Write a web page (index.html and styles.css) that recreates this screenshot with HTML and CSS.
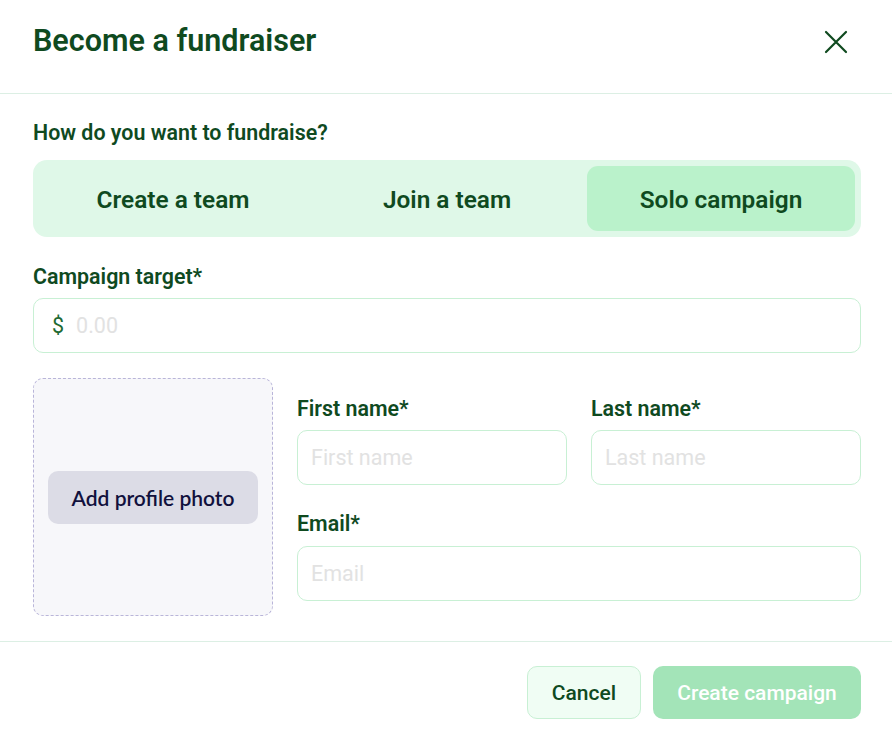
FILE: index.html
```html
<!DOCTYPE html>
<html>
<head>
<meta charset="utf-8">
<link rel="stylesheet" href="styles.css">
</head>
<body>
<div class="modal">
  <header class="header">
    <h1 class="title">Become a fundraiser</h1>
    <button class="close" aria-label="Close">
      <svg width="24" height="24" viewBox="0 0 24 24"><path d="M2 2 L22 22 M22 2 L2 22" stroke="#0f4a1f" stroke-width="2.2" fill="none" stroke-linecap="round"/></svg>
    </button>
  </header>
  <main class="content">
    <div class="label q">How do you want to fundraise?</div>
    <div class="segmented">
      <div class="seg">Create a team</div>
      <div class="seg">Join a team</div>
      <div class="seg active">Solo campaign</div>
    </div>
    <div class="label target">Campaign target*</div>
    <div class="input money"><span class="dollar">$</span><span class="ph">0.00</span></div>
    <div class="row">
      <div class="photo">
        <button class="photo-btn">Add profile photo</button>
      </div>
      <div class="fields">
        <div class="pair">
          <div class="field">
            <div class="label">First name*</div>
            <div class="input"><span class="ph">First name</span></div>
          </div>
          <div class="field">
            <div class="label">Last name*</div>
            <div class="input"><span class="ph">Last name</span></div>
          </div>
        </div>
        <div class="field email">
          <div class="label">Email*</div>
          <div class="input"><span class="ph">Email</span></div>
        </div>
      </div>
    </div>
  </main>
  <footer class="footer">
    <button class="btn cancel">Cancel</button>
    <button class="btn create">Create campaign</button>
  </footer>
</div>
</body>
</html>
```
FILE: styles.css
```css
* { box-sizing: border-box; }
body {
  margin: 0;
  background: #ffffff;
  font-family: Roboto, "Liberation Sans", sans-serif;
  color: #0f4a1f;
}
.modal { width: 892px; }
.header {
  height: 94px;
  display: flex;
  align-items: center;
  justify-content: space-between;
  padding: 0 44px 12px 33px;
  border-bottom: 1px solid #dcefe4;
}
.title {
  margin: 0;
  font-size: 30.5px;
  font-weight: 600;
  line-height: 36px;
  color: #0f4a1f;
}
.close {
  border: 0;
  background: none;
  padding: 0;
  width: 24px;
  height: 24px;
  display: flex;
  margin-top: 2px;
}
.content {
  padding: 26px 31px 25px 33px;
  display: flex;
  flex-direction: column;
}
.label {
  font-size: 21.4px;
  font-weight: 600;
  line-height: 26px;
  color: #0f4a1f;
}
.q { margin-bottom: 14px; }
.segmented {
  height: 77px;
  background: #dff8e8;
  border-radius: 14px;
  padding: 6px;
  display: grid;
  grid-template-columns: 1fr 1fr 1fr;
  gap: 6px;
}
.seg {
  display: flex;
  align-items: center;
  justify-content: center;
  font-size: 24.4px;
  font-weight: 600;
  border-radius: 11px;
  color: #0f4a1f;
  padding-top: 2px;
}
.seg.active { background: #baf2cb; }
.target { margin-top: 27px; margin-bottom: 8px; }
.input {
  height: 55px;
  border: 1px solid #c8f0d4;
  border-radius: 10px;
  display: flex;
  align-items: center;
  padding-left: 13px;
  font-size: 21.5px;
  background: #fff;
}
.ph { color: #e2e2e2; }
.money { padding-left: 18px; }
.dollar { color: #1e6a32; margin-right: 12px; }
.row {
  margin-top: 25px;
  display: flex;
  gap: 24px;
}
.photo {
  width: 240px;
  height: 238px;
  flex: none;
  border: 1px dashed #b9b5d9;
  border-radius: 10px;
  background: #f7f7fa;
  display: flex;
  align-items: center;
  padding: 0 14px;
}
.photo-btn {
  width: 100%;
  height: 53px;
  border: 0;
  border-radius: 10px;
  background: #dcdce6;
  font-family: Lato, "Open Sans", sans-serif;
  font-size: 21px;
  font-weight: 600;
  color: #11113d;
}
.fields {
  flex: 1;
  padding-top: 18px;
  display: flex;
  flex-direction: column;
}
.pair {
  display: grid;
  grid-template-columns: 1fr 1fr;
  gap: 24px;
}
.field .label { margin-bottom: 8px; }
.email { margin-top: 26px; }
.email .label { margin-bottom: 9px; }
.footer {
  border-top: 1px solid #dcefe4;
  padding: 24px 31px 16px 33px;
  display: flex;
  justify-content: flex-end;
  gap: 12px;
}
.btn {
  height: 53px;
  border-radius: 10px;
  font-family: Roboto, "Liberation Sans", sans-serif;
  font-size: 21px;
  font-weight: 500;
  padding: 0;
}
.cancel {
  width: 114px;
  background: #f0fdf4;
  border: 1px solid #c8f0d4;
  color: #0f4a1f;
}
.create {
  width: 208px;
  background: #a3e4b8;
  border: 0;
  color: #ffffff;
}
```
